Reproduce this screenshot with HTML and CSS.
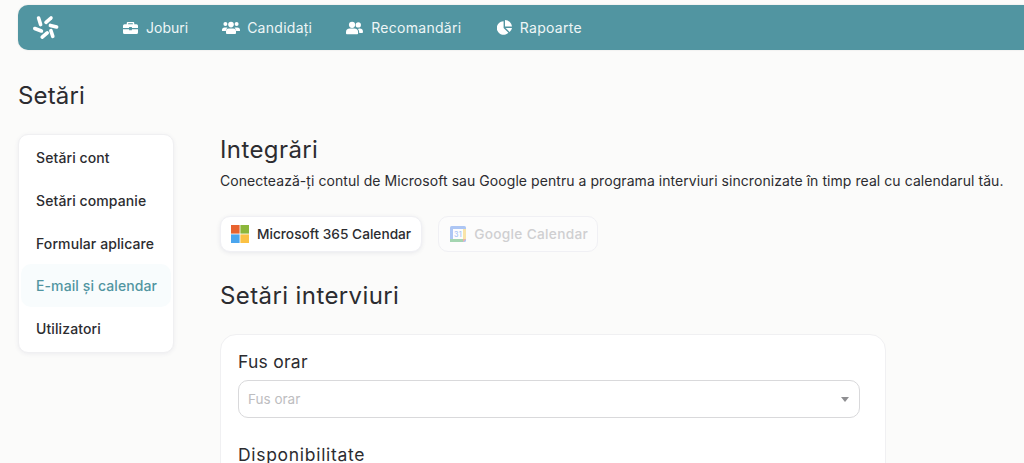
FILE: index.html
```html
<!DOCTYPE html>
<html lang="ro">
<head>
<meta charset="utf-8">
<title>Setări</title>
<link rel="stylesheet" href="styles.css">
</head>
<body>
<div class="page">
  <header class="topbar">
    <svg class="logo" viewBox="0 0 28 26" width="28" height="26" aria-hidden="true">
      <g stroke="#fff" stroke-width="3.6" stroke-linecap="round" fill="none">
        <path d="M6.6 3 L8.6 9.6"/>
        <path d="M19 3 L14 7.4"/>
        <path d="M24.6 12 L18.4 10.4"/>
        <path d="M20.8 21.4 L18.9 15.6"/>
        <path d="M10.2 22.2 L15.2 17.9"/>
        <path d="M2.8 13.5 L9.4 16"/>
      </g>
    </svg>
    <nav class="nav">
      <a class="nav-item nav-jobs">
        <svg class="nav-icon" viewBox="0 0 16 14" width="15" height="14" aria-hidden="true"><path fill="#fff" d="M5 0.6h6a1 1 0 0 1 1 1V3h2.4A1.6 1.6 0 0 1 16 4.6V7H9.5V6h-3v1H0V4.6A1.6 1.6 0 0 1 1.6 3H4V1.6a1 1 0 0 1 1-1zM5.5 2v1h5V2zM0 8.2h6.5v1.2h3V8.2H16v3.6A1.6 1.6 0 0 1 14.4 13.4H1.6A1.6 1.6 0 0 1 0 11.8z"/></svg>
        <span>Joburi</span>
      </a>
      <a class="nav-item nav-candidates">
        <svg class="nav-icon" viewBox="0 0 18 14" width="18" height="14" aria-hidden="true"><g fill="#fff"><circle cx="3.4" cy="3" r="2"/><circle cx="14.6" cy="3" r="2"/><circle cx="9" cy="3.6" r="2.8"/><path d="M0 9a2.6 2.6 0 0 1 2.6-2.6h1.6c.5 0 1 .2 1.3.4A4 4 0 0 0 3.8 10H0.6A.6.6 0 0 1 0 9.4zM18 9a2.6 2.6 0 0 0-2.6-2.6h-1.6c-.5 0-1 .2-1.3.4a4 4 0 0 1 1.7 3.2h3.2a.6.6 0 0 0 .6-.6zM6.8 7.4h4.4A2.8 2.8 0 0 1 14 10.2v1.9a.9.9 0 0 1-.9.9H4.9a.9.9 0 0 1-.9-.9v-1.9a2.8 2.8 0 0 1 2.8-2.8z"/></g></svg>
        <span>Candidați</span>
      </a>
      <a class="nav-item">
        <svg class="nav-icon" viewBox="0 0 18 14" width="17" height="14" aria-hidden="true"><g fill="#fff"><circle cx="6.4" cy="3.6" r="3.3"/><path d="M4 7.6h4.8A4 4 0 0 1 12.8 11.6v1a.9.9 0 0 1-.9.9H.9a.9.9 0 0 1-.9-.9v-1A4 4 0 0 1 4 7.6z"/><circle cx="13" cy="3.8" r="2.8"/><path d="M14 7.6h.4A3.6 3.6 0 0 1 18 11.2a1 1 0 0 1-1 1h-3v-.6a5 5 0 0 0-1.4-3.5A3.5 3.5 0 0 1 14 7.6z"/></g></svg>
        <span>Recomandări</span>
      </a>
      <a class="nav-item nav-reports">
        <svg class="nav-icon" viewBox="0 0 15 15" width="15" height="15" aria-hidden="true"><g fill="#fff"><path d="M6.6 1.2V8l4.8 4.8A6.8 6.8 0 1 1 6.6 1.2z"/><path d="M8 0a7 7 0 0 1 7 6.6H8z"/><path d="M8.6 8H15a7 7 0 0 1-2.4 4z"/></g></svg>
        <span>Rapoarte</span>
      </a>
    </nav>
  </header>

  <h1 class="page-title">Setări</h1>

  <div class="layout">
    <aside class="sidebar">
      <a class="side-item">Setări cont</a>
      <a class="side-item">Setări companie</a>
      <a class="side-item">Formular aplicare</a>
      <a class="side-item side-active">E-mail și calendar</a>
      <a class="side-item">Utilizatori</a>
    </aside>

    <main class="content">
      <h2 class="heading">Integrări</h2>
      <p class="lead">Conectează-ți contul de Microsoft sau Google pentru a programa interviuri sincronizate în timp real cu calendarul tău.</p>

      <div class="integrations">
        <button class="int-btn" type="button">
          <svg viewBox="0 0 18 18" width="18" height="18" aria-hidden="true">
            <rect width="8.6" height="8.6" fill="#e8632f"/>
            <rect x="9.4" width="8.6" height="8.6" fill="#8cb63a"/>
            <rect y="9.4" width="8.6" height="8.6" fill="#4aa5ee"/>
            <rect x="9.4" y="9.4" width="8.6" height="8.6" fill="#fbc143"/>
          </svg>
          <span>Microsoft 365 Calendar</span>
        </button>
        <button class="int-btn int-disabled" type="button">
          <svg viewBox="0 0 16 16" width="16" height="16" aria-hidden="true">
            <rect width="16" height="16" rx="1.6" fill="#4f86ec"/>
            <rect x="13" y="3" width="3" height="10" fill="#f6c945"/>
            <rect y="13" width="13" height="3" fill="#3aa757"/>
            <path d="M13 13h3l-3 3z" fill="#e8503f"/>
            <rect x="3" y="3" width="10" height="10" fill="#fff"/>
            <text class="cal-num" x="8" y="11" text-anchor="middle">31</text>
          </svg>
          <span>Google Calendar</span>
        </button>
      </div>

      <h2 class="heading heading-second">Setări interviuri</h2>

      <section class="card">
        <label class="field-label">Fus orar</label>
        <div class="select">
          <span class="placeholder">Fus orar</span>
          <span class="caret"></span>
        </div>
        <div class="field-label field-second">Disponibilitate</div>
      </section>
    </main>
  </div>
</div>
</body>
</html>
```
FILE: styles.css
```css
* { box-sizing: border-box; }
html, body { margin: 0; height: 100%; overflow: hidden; }
body {
  background: #fbfbfa;
  color: #2c2c30;
  font-family: Inter, "Noto Sans", sans-serif;
}
.page { padding: 5px 0 0 18px; }
.topbar {
  height: 45px;
  background: #5195a1;
  border-radius: 10px 0 0 10px;
  display: flex;
  align-items: center;
  padding-left: 14px;
  box-shadow: 0 0 2px rgba(0,0,0,.12);
}
.logo { flex: none; }
.nav { display: flex; align-items: center; margin-left: 63px; gap: 34px; }
.nav-item {
  display: flex;
  align-items: center;
  gap: 8px;
  color: #eef5f6;
  font-size: 14px;
  letter-spacing: .27px;
}
.nav-jobs { letter-spacing: 0; }
.nav-candidates { gap: 7px; }
.nav-reports { margin-left: 1.5px; }
.page-title {
  margin: 31px 0 0;
  font-size: 24px;
  line-height: 30px;
  font-weight: 400;
  letter-spacing: .15px;
}
.layout { display: flex; margin-top: 23px; }
.sidebar {
  width: 156px;
  height: 219px;
  flex: none;
  background: #fff;
  border: 1px solid #f0f0f2;
  border-radius: 10px;
  box-shadow: 0 1px 4px rgba(60,70,110,.08);
  padding: 1px 2px 0;
  display: flex;
  flex-direction: column;
}
.side-item {
  height: 42.8px;
  line-height: 43px;
  padding-left: 15px;
  font-size: 14px;
  font-weight: 500;
  letter-spacing: .1px;
  border-radius: 10px;
  white-space: nowrap;
}
.side-active { background: #f8fcfd; color: #5195a1; }
.content { margin-left: 46px; min-width: 0; padding-top: 1px; }
.heading {
  margin: 0;
  font-size: 24px;
  line-height: 30px;
  font-weight: 400;
  letter-spacing: .4px;
}
.lead {
  margin: 7px 0 0;
  font-size: 14px;
  line-height: 18px;
  letter-spacing: .06px;
  white-space: nowrap;
}
.integrations { display: flex; gap: 16px; margin-top: 26px; }
.int-btn {
  height: 36px;
  display: flex;
  align-items: center;
  gap: 8px;
  padding: 0 10px;
  background: #fff;
  border: 1px solid #f0f0f4;
  border-radius: 10px;
  box-shadow: 0 1px 4px rgba(60,70,110,.1);
  color: #2c2c30;
  font-family: inherit;
  font-size: 13.7px;
  font-weight: 500;
}
.int-disabled {
  color: #cfcfd1;
  box-shadow: none;
  background: #fcfcfc;
  padding: 0 9px 0 11px;
  letter-spacing: .3px;
}
.int-disabled svg { opacity: .45; }
.cal-num { font-size: 7px; font-family: Inter, sans-serif; fill: #4f86ec; font-weight: 600; }
.heading-second { margin-top: 29px; }
.card {
  margin-top: 23px;
  width: 666px;
  height: 200px;
  padding: 16px 25px 0 17px;
  background: #fff;
  border: 1px solid #f0f0f2;
  border-radius: 16px;
}
.field-label {
  display: block;
  font-size: 17.5px;
  line-height: 22px;
  letter-spacing: .25px;
  color: #2c2c30;
}
.select {
  margin-top: 7px;
  height: 38px;
  width: 622px;
  border: 1px solid #d9d9db;
  border-radius: 10px;
  display: flex;
  align-items: center;
  justify-content: space-between;
  padding: 0 10px 0 9px;
}
.placeholder { font-size: 13.5px; color: #bdbdc0; }
.caret {
  width: 0;
  height: 0;
  border-left: 4.5px solid transparent;
  border-right: 4.5px solid transparent;
  border-top: 5px solid #8f8f92;
}
.field-second { margin-top: 26px; letter-spacing: .7px; }
```
